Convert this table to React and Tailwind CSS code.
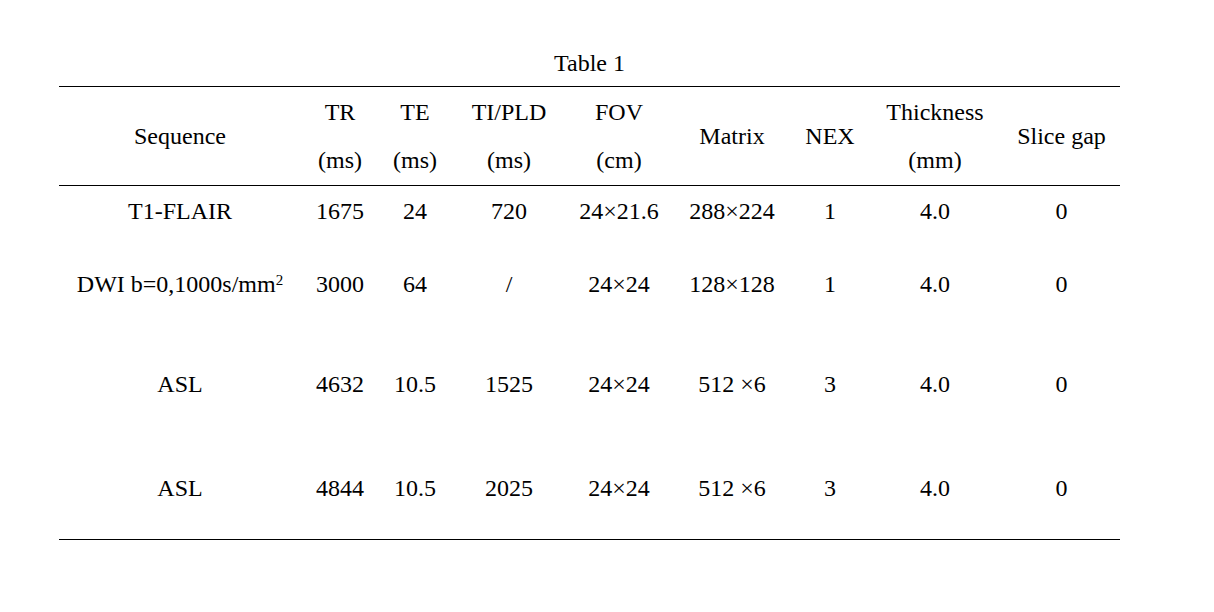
import React from 'react';

const cols = [242, 78, 72, 116, 104, 122, 74, 136, 117];

const header = [
  ['Sequence'],
  ['TR', '(ms)'],
  ['TE', '(ms)'],
  ['TI/PLD', '(ms)'],
  ['FOV', '(cm)'],
  ['Matrix'],
  ['NEX'],
  ['Thickness', '(mm)'],
  ['Slice gap'],
];

const rows = [
  { h: 52, cells: ['T1-FLAIR', '1675', '24', '720', '24×21.6', '288×224', '1', '4.0', '0'] },
  { h: 94, cells: ['DWI', '3000', '64', '/', '24×24', '128×128', '1', '4.0', '0'] },
  { h: 106, cells: ['ASL', '4632', '10.5', '1525', '24×24', '512 ×6', '3', '4.0', '0'] },
  { h: 102, cells: ['ASL', '4844', '10.5', '2025', '24×24', '512 ×6', '3', '4.0', '0'] },
];

export default function App() {
  return (
    <div className="w-[1214px] h-[612px] bg-white text-black pt-[50px] pl-[59px] font-['Liberation_Serif','Tinos','DejaVu_Serif',serif]">
      <div className="w-[1061px] text-center text-[24px] leading-[27px] mb-[9px]">Table 1</div>
      <table className="table-fixed border-collapse w-[1061px] text-[24px] border-t border-b border-black">
        <colgroup>
          {cols.map((w, i) => (
            <col key={i} style={{ width: w }} />
          ))}
        </colgroup>
        <thead>
          <tr className="h-[99px] border-b border-black">
            {header.map((h, i) => (
              <th key={i} className="font-normal text-center align-middle leading-[48px] p-0 whitespace-nowrap">
                {h.map((t, j) => (
                  <div key={j}>{t}</div>
                ))}
              </th>
            ))}
          </tr>
        </thead>
        <tbody>
          {rows.map((r, ri) => (
            <tr key={ri} style={{ height: r.h }}>
              {r.cells.map((c, ci) => (
                <td key={ci} className="text-center align-middle p-0 leading-[27px] whitespace-nowrap">
                  {ri === 1 && ci === 0 ? (
                    <span>
                      DWI b=0,1000s/mm<sup className="text-[15px]">2</sup>
                    </span>
                  ) : (
                    c
                  )}
                </td>
              ))}
            </tr>
          ))}
        </tbody>
      </table>
    </div>
  );
}
